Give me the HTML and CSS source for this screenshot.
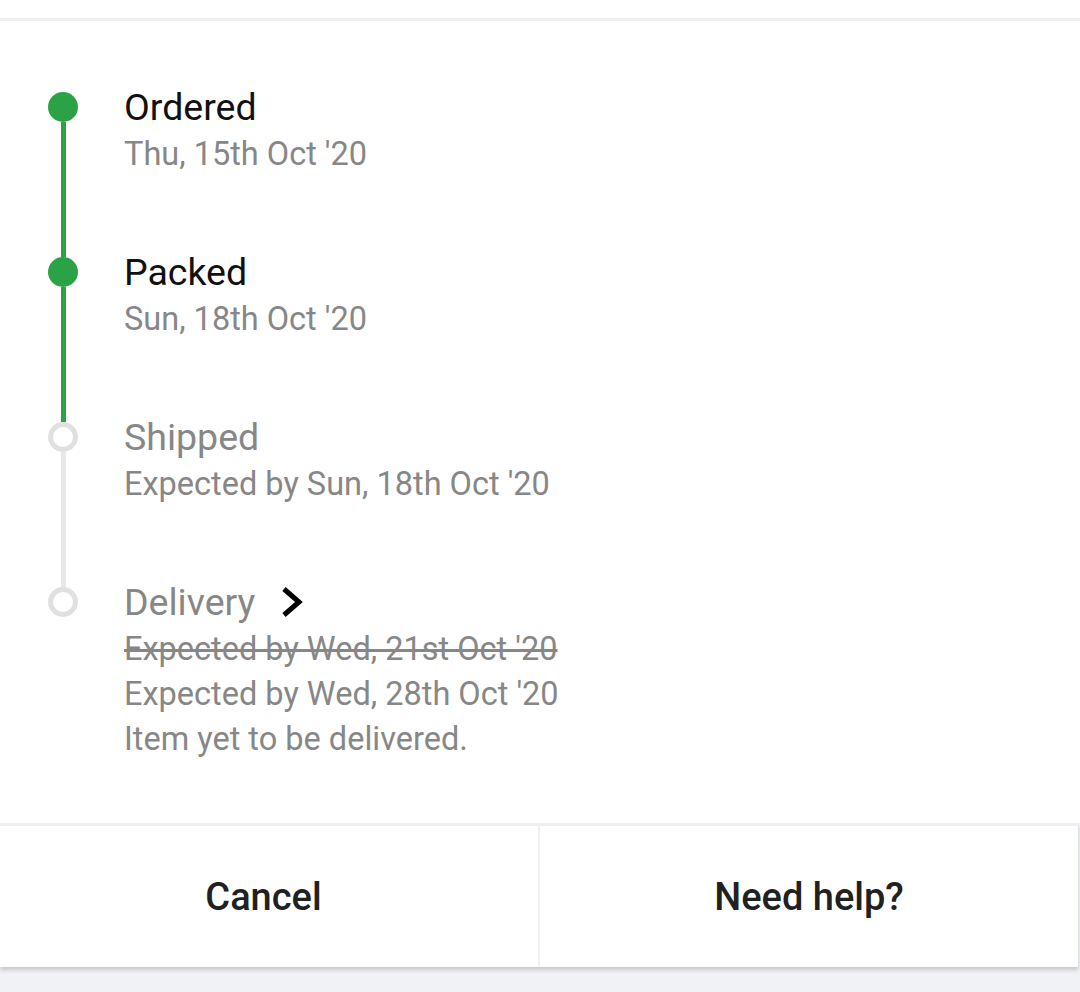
FILE: index.html
```html
<!DOCTYPE html>
<html>
<head>
<meta charset="utf-8">
<link rel="stylesheet" href="styles.css">
</head>
<body>
<div class="page">
  <div class="top-strip"></div>
  <section class="tracker">
    <div class="step done">
      <div class="rail"><span class="dot"></span><span class="line"></span></div>
      <div class="info">
        <div class="title">Ordered</div>
        <div class="sub">Thu, 15th Oct '20</div>
      </div>
    </div>
    <div class="step done">
      <div class="rail"><span class="dot"></span><span class="line"></span></div>
      <div class="info">
        <div class="title">Packed</div>
        <div class="sub">Sun, 18th Oct '20</div>
      </div>
    </div>
    <div class="step pending">
      <div class="rail"><span class="dot"></span><span class="line"></span></div>
      <div class="info">
        <div class="title">Shipped</div>
        <div class="sub">Expected by Sun, 18th Oct '20</div>
      </div>
    </div>
    <div class="step pending last">
      <div class="rail"><span class="dot"></span></div>
      <div class="info">
        <div class="title">Delivery
          <svg class="chev" width="24" height="32" viewBox="0 0 24 32"><path d="M4 3 L19 16 L4 29" fill="none" stroke="#000" stroke-width="5"/></svg>
        </div>
        <div class="sub strike">Expected by Wed, 21st Oct '20</div>
        <div class="sub">Expected by Wed, 28th Oct '20</div>
        <div class="sub">Item yet to be delivered.</div>
      </div>
    </div>
  </section>
  <div class="actions">
    <button class="btn btn-cancel">Cancel</button>
    <button class="btn">Need help?</button>
  </div>
</div>
</body>
</html>
```

FILE: styles.css
```css
* { box-sizing: border-box; }
html, body { margin: 0; padding: 0; }
body {
  background: #f1f2f5;
  font-family: Roboto, "Noto Sans", sans-serif;
  width: 1080px;
  height: 992px;
  overflow: hidden;
}
.page { display: flex; flex-direction: column; }
.top-strip {
  height: 21px;
  background: #fff;
  border-bottom: 3px solid #efefef;
}
.tracker {
  background: #fff;
  padding: 63px 0 61px 0;
  display: flex;
  flex-direction: column;
}
.step {
  display: flex;
  height: 165px;
}
.step.last { height: auto; }
.rail {
  width: 124px;
  flex: none;
  display: flex;
  flex-direction: column;
  align-items: flex-start;
  padding-left: 48px;
  padding-top: 8px;
}
.dot {
  width: 30px;
  height: 30px;
  border-radius: 50%;
  flex: none;
}
.line {
  width: 5px;
  flex: 1;
  margin-left: 12.5px;
  margin-bottom: -8px;
}
.done .dot { background: #2ba245; }
.done .line { background: #2ba245; }
.pending .dot { background: #fff; border: 5px solid #e0e0e0; }
.pending .line { background: #e8e8e8; }
.info { display: flex; flex-direction: column; }
.title {
  font-size: 37.5px;
  line-height: 46px;
  color: #111;
  display: flex;
  align-items: center;
  margin-bottom: 2px;
}
.pending .title { color: #878787; }
.sub {
  font-size: 32.5px;
  line-height: 45px;
  color: #878787;
}
.strike { text-decoration: line-through; text-decoration-thickness: 3px; }
.chev { margin-left: 25px; }
.actions {
  display: flex;
  background: #fff;
  border-top: 3px solid #efefef;
  box-shadow: 0 3px 4px rgba(0,0,0,0.18);
  margin-right: 2px;
}
.btn {
  flex: 1 1 0;
  height: 141px;
  background: #fff;
  border: none;
  font-family: Roboto, sans-serif;
  font-size: 38px;
  font-weight: 500;
  color: #212121;
  padding: 0;
}
.btn-cancel { text-indent: -11px; }
.btn + .btn { border-left: 2px solid #efefef; }
```
